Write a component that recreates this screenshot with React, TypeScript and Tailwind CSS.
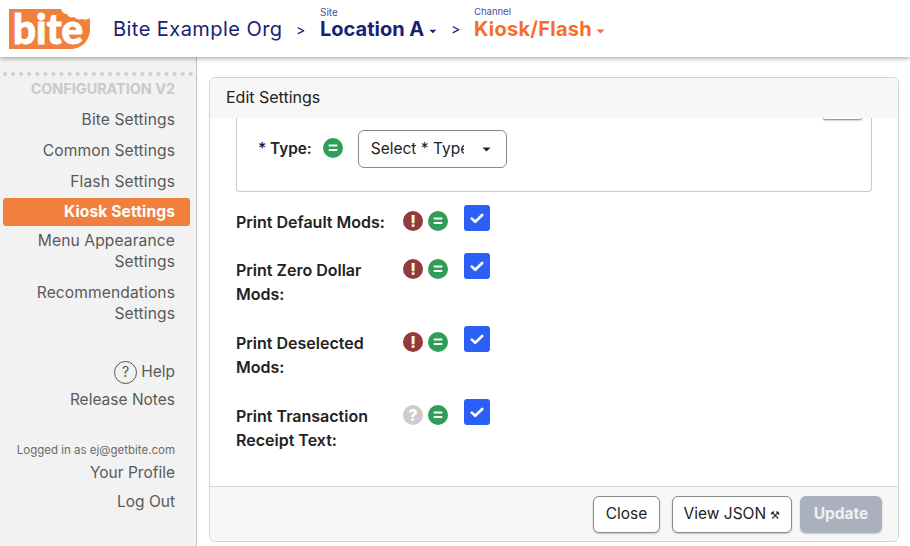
const sans = "font-['Inter','Liberation_Sans',sans-serif]";

const navItems = [
  { label: "Bite Settings" },
  { label: "Common Settings" },
  { label: "Flash Settings" },
  { label: "Kiosk Settings", active: true },
  { label: "Menu Appearance Settings" },
  { label: "Recommendations Settings" },
];

const rows = [
  { label: "Print Default Mods:", status: "error", h: "h-[48px]" },
  { label: "Print Zero Dollar Mods:", status: "error", h: "h-[73px]" },
  { label: "Print Deselected Mods:", status: "error", h: "h-[73px]" },
  { label: "Print Transaction Receipt Text:", status: "help", h: "h-[73px]" },
];

function Caret({ className }: { className: string }) {
  return (
    <svg width="9" height="5" viewBox="0 0 9 5" className={className}>
      <path d="M0.5 0.5h8L4.5 4.5z" fill="currentColor" />
    </svg>
  );
}

function Logo() {
  return (
    <svg width="81" height="40" viewBox="0 0 81 40" className="shrink-0">
      <path
        d="M0 0h52c1 3 3 5 6 5 1 3 4 4 7 3 2 2 5 3 8 2 3 1 5 1 7-1 1 1 1 3 1 5v6c0 11-8 20-19 20H0z"
        fill="#f0803c"
      />
      <text
        x="4"
        y="35"
        fill="#fff"
        stroke="#fff"
        strokeWidth="1"
        fontSize="42"
        fontWeight="900"
        textLength="70"
        lengthAdjust="spacingAndGlyphs"
        fontFamily="Lato, Inter, sans-serif"
      >
        bite
      </text>
    </svg>
  );
}

function EqualBadge() {
  return (
    <span className="flex h-5 w-5 shrink-0 items-center justify-center rounded-full bg-[#2f9e57]">
      <svg width="10" height="8" viewBox="0 0 10 8">
        <path d="M1.5 1.5h7M1.5 6h7" stroke="#fff" strokeWidth="2" strokeLinecap="round" />
      </svg>
    </span>
  );
}

function StatusBadge({ status }: { status: string }) {
  return (
    <span
      className={`flex h-5 w-5 shrink-0 items-center justify-center rounded-full text-[16px] leading-none font-extrabold text-white ${
        status === "error" ? "bg-[#943a3a]" : "bg-[#cccccc]"
      }`}
    >
      {status === "error" ? "!" : "?"}
    </span>
  );
}

function Checkbox() {
  return (
    <span className="flex h-[26px] w-[26px] shrink-0 items-center justify-center rounded-[3px] bg-[#2b5ff5]">
      <svg width="14" height="11" viewBox="0 0 14 11">
        <path d="M1.8 5.6l3.4 3.2 7-6.8" fill="none" stroke="#fff" strokeWidth="2.6" strokeLinecap="round" strokeLinejoin="round" />
      </svg>
    </span>
  );
}

export default function App() {
  return (
    <div className={`flex h-[546px] w-[910px] flex-col overflow-hidden bg-white ${sans}`}>
      <header className="relative z-10 flex h-[57px] shrink-0 items-center bg-white pl-[9px] shadow-[0_1px_5px_rgba(0,0,0,0.4)]">
        <Logo />
        <span className="ml-[23px] w-[169px] text-[20px] tracking-[0.45px] whitespace-nowrap text-[#1a2173]">
          Bite Example Org
        </span>
        <span className="mt-[1px] ml-[14px] w-[9px] text-[14px] text-[#1a2173]">&gt;</span>
        <div className="ml-[15px] mb-[9px] flex w-[117px] flex-col">
          <span className="text-[10px] leading-[10px] text-[#4a4f95]">Site</span>
          <span className="flex items-center gap-[5px] text-[20px] leading-[25px] font-bold whitespace-nowrap text-[#1a2173]">
            Location A
            <Caret className="mt-[4px] text-[#1a2173]" />
          </span>
        </div>
        <span className="ml-[14px] w-[9px] text-[14px] text-[#1a2173]">&gt;</span>
        <div className="ml-[14px] mb-[9px] flex flex-col">
          <span className="text-[9.5px] leading-[10px] text-[#4a4f95]">Channel</span>
          <span className="flex items-center gap-[4px] text-[20px] leading-[25px] font-bold tracking-[0.25px] whitespace-nowrap text-[#f56f2b]">
            Kiosk/Flash
            <Caret className="mt-[4px] text-[#f56f2b]" />
          </span>
        </div>
      </header>

      <div className="flex min-h-0 flex-1">
        <aside className="flex w-[197px] shrink-0 flex-col border-r border-[#c4c4c4] bg-[#f2f2f2] pt-[15px] text-right text-[#5a5a5a]">
          <div className="mx-[3px] border-t-[4px] border-dotted border-[#cfcfcf]" />
          <div className="mt-[4px] pr-[21px] text-[14.4px] leading-[18px] font-bold text-[#c9c9c9]">
            CONFIGURATION V2
          </div>
          <nav className="mt-[6px] flex flex-col tracking-[0.1px]">
            {navItems.map((item) =>
              item.active ? (
                <div
                  key={item.label}
                  className="mt-[1px] mr-[6px] -mb-[1px] ml-[3px] rounded-[3px] bg-[#f0803c] py-[3px] pr-[15px] text-[15.6px] leading-[22px] font-bold text-white"
                >
                  {item.label}
                </div>
              ) : (
                <div key={item.label} className="py-[5px] pr-[21px] pl-[30px] text-[15.6px] leading-[21px]">
                  {item.label}
                </div>
              ),
            )}
          </nav>
          <div className="mt-[31px] flex items-center justify-end gap-[4px] pr-[21px] text-[15.5px] leading-[24px]">
            <span className="flex h-[23px] w-[23px] items-center justify-center rounded-full border border-[#555] text-[14px] text-[#555]">
              ?
            </span>
            Help
          </div>
          <div className="mt-[4px] pr-[21px] text-[15.5px] leading-[24px]">Release Notes</div>
          <div className="mt-[30px] pr-[21px] text-[11.5px] leading-[16px] text-[#6b6b6b]">
            Logged in as ej@getbite.com
          </div>
          <div className="mt-[3px] pr-[21px] text-[15.5px] leading-[24px]">Your Profile</div>
          <div className="mt-[5px] pr-[21px] text-[15.5px] leading-[24px]">Log Out</div>
        </aside>

        <main className="min-w-0 flex-1 pt-[20px] pr-[11px] pb-[4px] pl-[12px]">
          <div className="flex h-full flex-col overflow-hidden rounded-[6px] border border-[#d4d4d4]">
            <div className="relative z-10 flex h-[40px] shrink-0 items-center bg-[#f7f7f7] px-[16px] pb-[2px] text-[16px] text-[#222]">
              Edit Settings
            </div>
            <div className="min-h-0 flex-1 overflow-hidden px-[26px]">
              <div className="relative flex h-[74px] items-start rounded-b-[4px] border-x border-b border-[#c9c9c9] pt-[12px] pl-[21px]">
                <span className="absolute -top-[4px] right-[9px] h-[5px] w-[39px] rounded-[4px] bg-white shadow-[0_1px_2px_rgba(0,0,0,0.55)]" />
                <span className="mt-[9px] text-[15.3px] leading-[20px] font-semibold text-[#222]">* Type:</span>
                <span className="mt-[8px] ml-[11px]">
                  <EqualBadge />
                </span>
                <div className="ml-[15px] flex h-[38px] w-[149px] items-center rounded-[6px] border border-[#8a8a8a] pr-[15px] pl-[12px] text-[15.5px] text-[#222]">
                  <span className="w-[93px] overflow-hidden whitespace-nowrap">Select * Type</span>
                  <Caret className="ml-auto text-[#222]" />
                </div>
              </div>
              <div className="pt-[13px]">
                {rows.map((row) => (
                  <div key={row.label} className={`flex items-start ${row.h}`}>
                    <span className="mt-[5px] w-[167px] text-[16px] leading-[24px] font-semibold text-[#222]">
                      {row.label}
                    </span>
                    <span className="mt-[6px] flex gap-[5px]">
                      <StatusBadge status={row.status} />
                      <EqualBadge />
                    </span>
                    <span className="ml-[16px]">
                      <Checkbox />
                    </span>
                  </div>
                ))}
              </div>
            </div>
            <div className="flex h-[55px] shrink-0 items-center justify-end border-t border-[#d4d4d4] bg-[#f7f7f7] pr-[16px] text-[15.5px]">
              <button className="h-[37px] w-[67px] rounded-[6px] border border-[#8a8a8a] bg-white text-[#222] shadow-[0_1px_2px_rgba(0,0,0,0.2)]">
                Close
              </button>
              <button className="ml-[12px] h-[37px] w-[120px] rounded-[6px] border border-[#8a8a8a] bg-white text-[#222] shadow-[0_1px_2px_rgba(0,0,0,0.2)]">
                View JSON <span className="text-[11px]">⚒</span>
              </button>
              <button className="ml-[8px] h-[37px] w-[82px] rounded-[6px] bg-[#abb0bf] font-bold text-[#eef0f4] shadow-[0_1px_2px_rgba(0,0,0,0.2)]">
                Update
              </button>
            </div>
          </div>
        </main>
      </div>
    </div>
  );
}
